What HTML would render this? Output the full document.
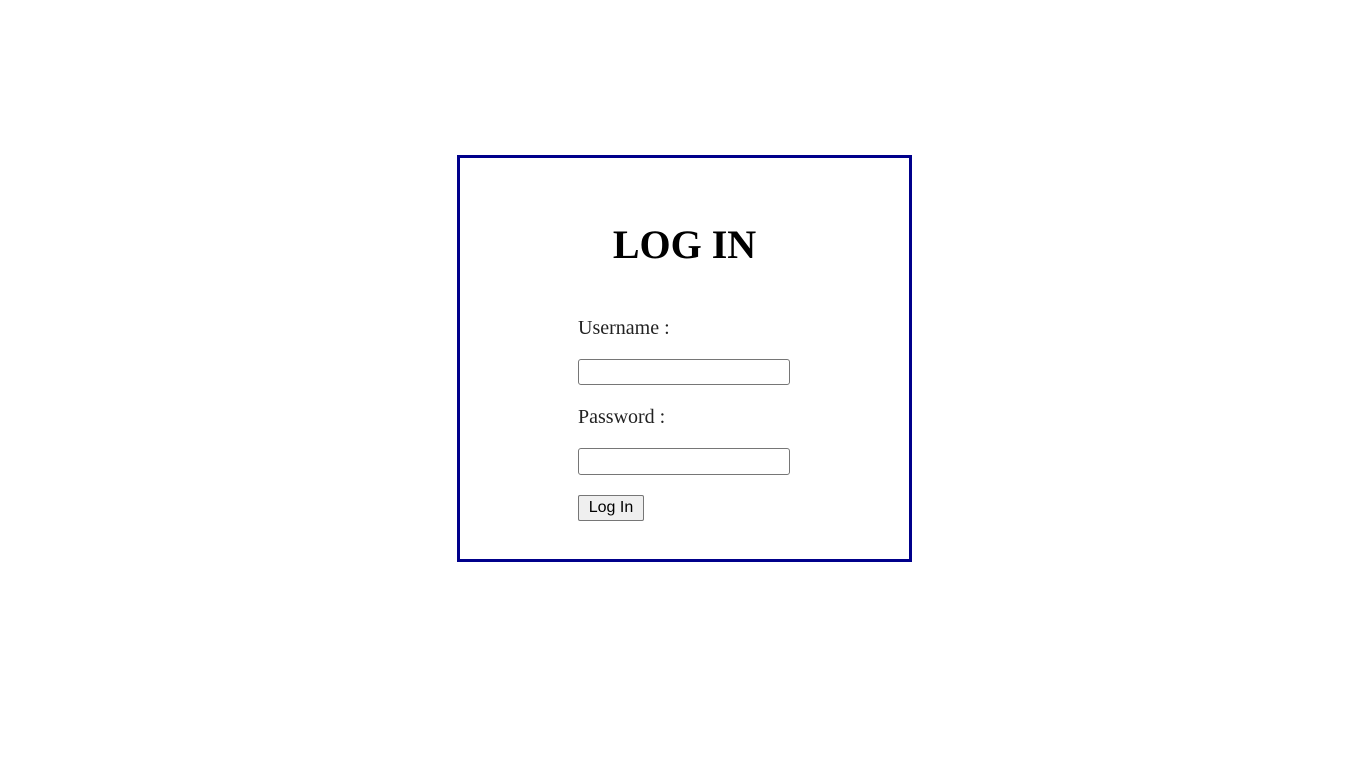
<!DOCTYPE html>
<html><head><meta charset="utf-8"><style>
html,body{margin:0;padding:0;background:#fff;width:1365px;height:768px;overflow:hidden;font-family:"Liberation Serif",serif;}
.box{position:absolute;left:457px;top:155px;width:449px;height:401px;border:3px solid #00008b;}
h1{position:absolute;top:222px;margin:0;text-align:center;font-size:40px;font-weight:bold;line-height:46px;}
.lbl{position:absolute;left:578px;font-size:20px;color:#222;}
.inp{position:absolute;left:578px;height:24px;border:1px solid #767676;border-radius:3px;box-sizing:border-box;width:212px;}
.btn{position:absolute;left:578px;top:495px;width:66px;height:26px;box-sizing:border-box;border:1px solid #767676;border-radius:2px;background:#efefef;font-family:"Liberation Sans",sans-serif;font-size:16px;text-align:center;line-height:23px;color:#000;}
</style></head><body>
<div class="box"></div>
<h1 style="left:457px;width:455px;">LOG IN</h1>
<div class="lbl" style="top:317px">Username :</div>
<div class="inp" style="top:359px;height:26px"></div>
<div class="lbl" style="top:406px">Password :</div>
<div class="inp" style="top:448px;height:27px"></div>
<div class="btn">Log In</div>
</body></html>
